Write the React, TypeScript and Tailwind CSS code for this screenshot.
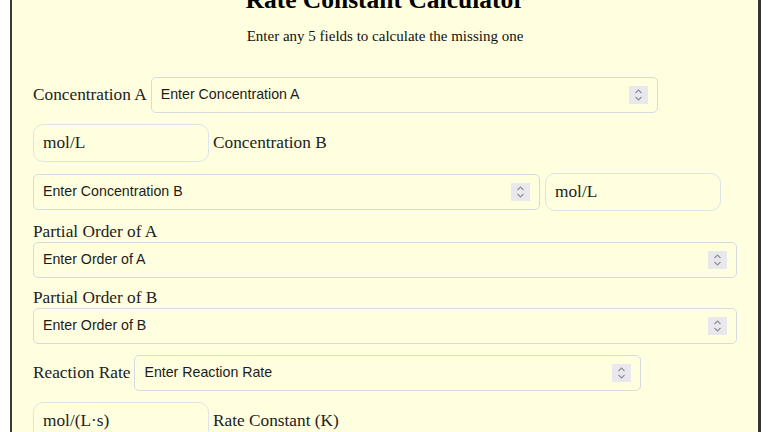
import { useState } from "react";

const serif = "font-['Liberation_Serif','Times_New_Roman',serif]";

function Spinner() {
  return (
    <div className="flex h-[18px] w-[19px] flex-col items-center justify-center bg-[#e9e9ed]">
      <svg width="9" height="14" viewBox="0 0 9 14" fill="none" stroke="#8f8f9d" strokeWidth="1.2">
        <path d="M1.5 5 L4.5 2 L7.5 5" />
        <path d="M1.5 9 L4.5 12 L7.5 9" />
      </svg>
    </div>
  );
}

function NumberField({ placeholder, className }: { placeholder: string; className: string }) {
  const [value, setValue] = useState("");
  return (
    <div
      className={`flex h-[36px] items-center rounded-[5px] border border-[#d3dbe3] pl-[9px] pr-[9px] ${className}`}
    >
      <input
        type="text"
        inputMode="decimal"
        value={value}
        onChange={(e) => setValue(e.target.value)}
        placeholder={placeholder}
        className="min-w-0 flex-1 bg-transparent font-['Liberation_Sans',Arial,sans-serif] text-[14.2px] text-[#1c1c1c] outline-none placeholder:text-[#1c1c1c]"
      />
      <Spinner />
    </div>
  );
}

function UnitSelect({ options }: { options: string[] }) {
  return (
    <select
      className={`h-[38px] w-[176px] appearance-none rounded-[10px] border border-[#dde3e8] bg-transparent pl-[9px] text-[17.3px] text-[#1c1c1c] outline-none ${serif}`}
    >
      {options.map((o) => (
        <option key={o}>{o}</option>
      ))}
    </select>
  );
}

function Label({ children }: { children: string }) {
  return <span className={`text-[17.3px] leading-[20px] text-[#222] ${serif}`}>{children}</span>;
}

export default function App() {
  return (
    <div className="h-[432px] overflow-hidden bg-white pl-[10px]">
      <div className="-mt-[17px] w-[751px] border-y-2 border-l-2 border-r-[3px] border-[#3a3a3a] border-r-[#333] border-r-double bg-[#ffffe0] px-[21px] pb-10">
        <h1 className={`text-center text-[25.5px] font-bold leading-[30px] text-black ${serif}`}>
          Rate Constant Calculator
        </h1>
        <p className={`mt-[12px] text-center text-[15px] leading-[18px] text-[#111] ${serif}`}>
          Enter any 5 fields to calculate the missing one
        </p>

        <div className="mt-[32px] flex items-center gap-[4px]">
          <Label>Concentration A</Label>
          <NumberField placeholder="Enter Concentration A" className="w-[507px]" />
        </div>
        <div className="mt-[11px] flex items-center gap-[4px]">
          <UnitSelect options={["mol/L", "mmol/L"]} />
          <Label>Concentration B</Label>
        </div>
        <div className="mt-[11px] flex items-center gap-[5px]">
          <NumberField placeholder="Enter Concentration B" className="w-[507px]" />
          <UnitSelect options={["mol/L", "mmol/L"]} />
        </div>

        <div className="mt-[11px] flex flex-col">
          <Label>Partial Order of A</Label>
          <NumberField placeholder="Enter Order of A" className="w-full" />
        </div>
        <div className="mt-[10px] flex flex-col">
          <Label>Partial Order of B</Label>
          <NumberField placeholder="Enter Order of B" className="w-full" />
        </div>

        <div className="mt-[11px] flex items-center gap-[4px]">
          <Label>Reaction Rate</Label>
          <NumberField placeholder="Enter Reaction Rate" className="w-[507px]" />
        </div>
        <div className="mt-[11px] flex items-center gap-[4px]">
          <UnitSelect options={["mol/(L·s)", "mmol/(L·s)"]} />
          <Label>Rate Constant (K)</Label>
        </div>
      </div>
    </div>
  );
}
